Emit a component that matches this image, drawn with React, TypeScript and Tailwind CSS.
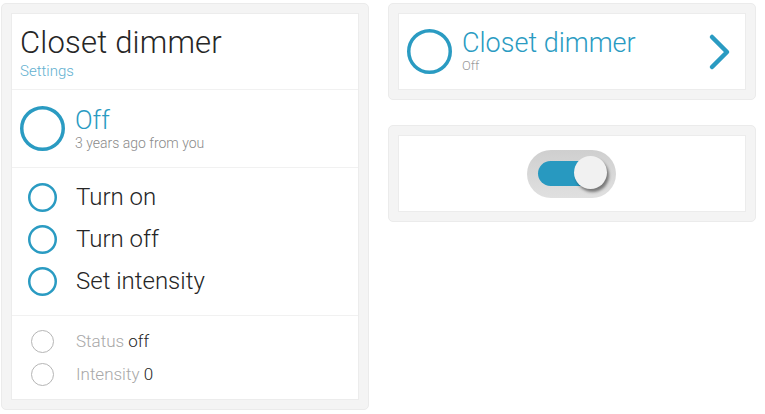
import React from 'react';

const BLUE = '#2a9bc2';

function Ring({ size, stroke, color }: { size: number; stroke: number; color: string }) {
  return (
    <svg width={size} height={size} viewBox={`0 0 ${size} ${size}`} className="shrink-0">
      <circle cx={size / 2} cy={size / 2} r={size / 2 - stroke / 2} fill="none" stroke={color} strokeWidth={stroke} />
    </svg>
  );
}

function Panel({ children, className = '' }: { children: React.ReactNode; className?: string }) {
  return (
    <div className={`rounded-[5px] border border-[#ebebeb] bg-[#f4f4f4] p-[9px] ${className}`}>
      <div className="h-full border border-[#ececec] bg-white">{children}</div>
    </div>
  );
}

const actions = ['Turn on', 'Turn off', 'Set intensity'];

export default function App() {
  return (
    <div
      className="flex h-[414px] w-[765px] items-start gap-[19px] bg-white pl-px pt-[3px] text-[#262626]"
      style={{ fontFamily: 'Roboto, "Liberation Sans", sans-serif' }}
    >
      <Panel className="h-[407px] w-[368px]">
        <div className="flex h-[76px] flex-col border-b border-[#f1f1f1] px-[8px] pt-[10px]">
          <div className="text-[31px] font-light leading-[38px] tracking-[0.2px]">Closet dimmer</div>
          <div className="text-[15px] font-light leading-[18px] text-[#62b0d0]">Settings</div>
        </div>

        <div className="flex h-[78px] items-center gap-[10px] border-b border-[#f1f1f1] pl-[8px]">
          <Ring size={45} stroke={3.5} color={BLUE} />
          <div className="flex flex-col">
            <div className="text-[26px] font-light leading-[28px]" style={{ color: BLUE }}>Off</div>
            <div className="text-[14px] font-light leading-[18px] text-[#8a8a8a]">3 years ago from you</div>
          </div>
        </div>

        <div className="flex h-[148px] flex-col gap-[13px] border-b border-[#f1f1f1] pl-[16px] pt-[15px]">
          {actions.map((a) => (
            <div key={a} className="flex h-[29px] items-center gap-[19px]">
              <Ring size={29} stroke={2.5} color={BLUE} />
              <span className="text-[24px] font-light leading-[29px]">{a}</span>
            </div>
          ))}
        </div>

        <div className="flex flex-col gap-[10px] pl-[19px] pt-[14px]">
          <div className="flex h-[23px] items-center gap-[22px]">
            <Ring size={23} stroke={1} color="#b5b5b5" />
            <span className="text-[17px] font-light leading-[23px] text-[#a8a8a8]">
              Status <span className="text-[#262626]">off</span>
            </span>
          </div>
          <div className="flex h-[23px] items-center gap-[22px]">
            <Ring size={23} stroke={1} color="#b5b5b5" />
            <span className="text-[17px] font-light leading-[23px] text-[#a8a8a8]">
              Intensity <span className="text-[#262626]">0</span>
            </span>
          </div>
        </div>
      </Panel>

      <div className="flex w-[368px] flex-col gap-[25px]">
        <Panel className="h-[97px]">
          <div className="flex h-full items-center pl-[8px] pr-[12px]">
            <Ring size={45} stroke={3.5} color={BLUE} />
            <div className="ml-[10px] flex flex-1 flex-col pb-[4px]">
              <div className="text-[27px] font-light leading-[32px]" style={{ color: BLUE }}>Closet dimmer</div>
              <div className="text-[13px] font-light leading-[13px] text-[#9a9a9a]">Off</div>
            </div>
            <svg width="26" height="40" viewBox="0 0 26 40">
              <path d="M5 5 L20 20 L5 35" fill="none" stroke={BLUE} strokeWidth="4.5" strokeLinecap="round" strokeLinejoin="round" />
            </svg>
          </div>
        </Panel>

        <Panel className="h-[97px]">
          <div className="flex h-full items-center justify-center pr-[2px]">
            <div className="flex h-[48px] w-[89px] items-center rounded-full bg-gradient-to-b from-[#cfcfcf] to-[#e0e0e0] pl-[11px]">
              <div className="relative h-[25px] w-[56px] rounded-l-full bg-[#2899c0]">
                <div className="absolute left-[36px] top-[-5px] h-[33px] w-[33px] rounded-full bg-[#f1f1f1] shadow-[2px_3px_3px_rgba(0,0,0,0.45)]" />
              </div>
            </div>
          </div>
        </Panel>
      </div>
    </div>
  );
}
